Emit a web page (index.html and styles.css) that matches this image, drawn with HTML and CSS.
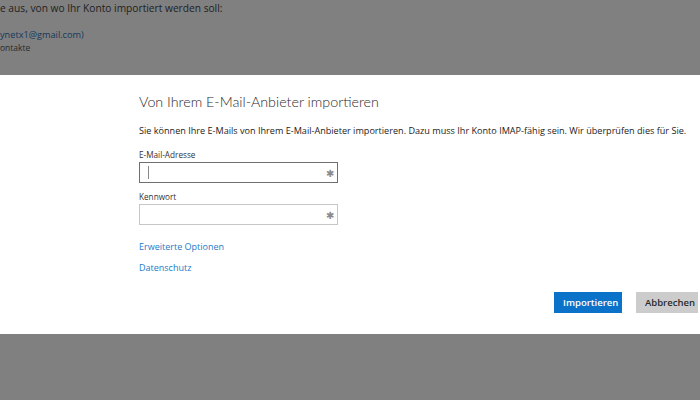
FILE: index.html
```html
<!DOCTYPE html>
<html>
<head>
    <title>Von Ihrem E-Mail-Anbieter importieren</title>
    <link rel="stylesheet" href="styles.css">
</head>
<body>
    <div class="hintergrund">
        <p class="frage">e aus, von wo Ihr Konto importiert werden soll:</p>
        <p class="konto">ynetx1@gmail.com)</p>
        <p class="kontakte">ontakte</p>
    </div>

    <div class="dialog">
        <h1>Von Ihrem E-Mail-Anbieter importieren</h1>
        <p class="info">Sie können Ihre E-Mails von Ihrem E-Mail-Anbieter importieren. Dazu muss Ihr Konto IMAP-fähig sein. Wir überprüfen dies für Sie.</p>

        <label class="feld-label">E-Mail-Adresse</label>
        <div class="feld aktiv"><span class="cursor"></span><span class="stern">✱</span></div>

        <label class="feld-label">Kennwort</label>
        <div class="feld"><span class="stern">✱</span></div>

        <a class="link" href="#">Erweiterte Optionen</a>
        <a class="link" href="#">Datenschutz</a>

        <div class="knoepfe">
            <button class="btn primaer">Importieren</button>
            <button class="btn">Abbrechen</button>
        </div>
    </div>
</body>
</html>
```

FILE: styles.css
```css
body { margin: 0; background: #808080; font-family: "Open Sans", Arial, sans-serif; color: #222; }
.hintergrund { height: 75px; color: #1e1e1e; }
.hintergrund p { margin: 0; }
.frage { font-size: 10.2px; padding-top: 1px; line-height: 14px; }
.konto { font-size: 9.2px; margin-top: 13px !important; line-height: 14px; color: #16385a; }
.kontakte { font-size: 8.5px; line-height: 12px; color: #2a2a2a; }

.dialog { background: #fff; height: 259px; padding-left: 139px; padding-right: 2px; box-sizing: border-box; display: flex; flex-direction: column; align-items: flex-start; }
.dialog h1 { font-family: Lato, "Open Sans", sans-serif; font-weight: 300; font-size: 14.3px; margin: 16px 0 0; line-height: 22px; color: #2b2b2b; }
.info { font-size: 9.1px; margin: 11px 0 0; line-height: 14px; color: #222; white-space: nowrap; }
.feld-label { font-size: 8.2px; margin-top: 11px; line-height: 12px; color: #333; }
.feld { width: 199px; height: 21px; box-sizing: border-box; border: 1px solid #c6c6c6; margin-top: 1px; position: relative; display: flex; align-items: center; }
.feld.aktiv { border-color: #6f6f6f; }
.cursor { width: 1px; height: 13px; background: #888; margin-left: 8px; }
.stern { position: absolute; right: 3px; top: 3px; font-size: 10px; color: #8a8a8a; }
.feld + .feld-label { margin-top: 8px; }
.link { font-size: 9px; color: #1d7bc7; text-decoration: none; line-height: 14px; }
.feld + .link { margin-top: 15px; }
.link + .link { margin-top: 7px; }
.knoepfe { align-self: flex-end; display: flex; gap: 14px; margin-top: 17px; }
.btn { font-family: "Open Sans", Arial, sans-serif; font-size: 9.5px; font-weight: 600; height: 21px; padding: 0 9px; border: 0; background: #cccccc; color: #2a2a2a; }
.btn.primaer { background: #0a72c9; color: #fff; width: 68px; }
.btn + .btn { width: 62px; }
```
